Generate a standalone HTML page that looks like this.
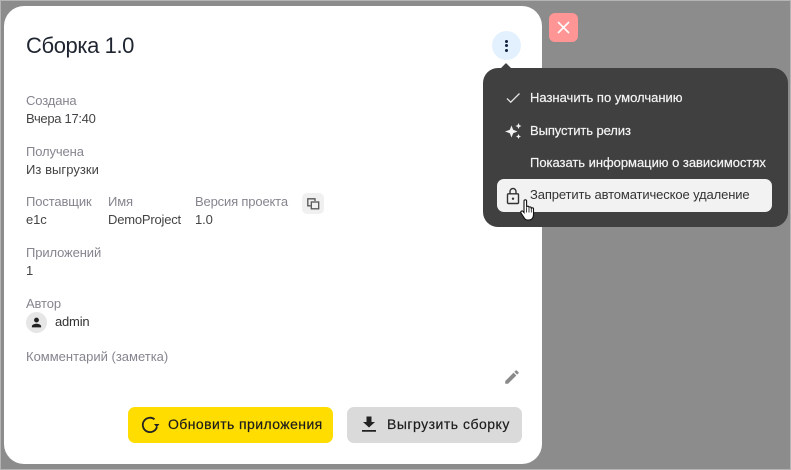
<!DOCTYPE html>
<html><head><meta charset="utf-8">
<style>
*{box-sizing:border-box;margin:0;padding:0}
html,body{width:791px;height:470px;overflow:hidden;background:#8c8c8c;font-family:"Liberation Sans",sans-serif}
.abs,.t{position:absolute}
.t{white-space:nowrap;font-size:13px;line-height:16px;letter-spacing:-.12px}
.l{color:#85858f}
.v{color:#444}
.m{color:#f4f4f4;font-size:13px;-webkit-text-stroke:.2px #f4f4f4}
.b{font-size:14px;line-height:18px;color:#1d1d1d;letter-spacing:.42px;-webkit-text-stroke:.2px #1d1d1d}
svg{position:absolute;display:block}
</style></head><body>
<div class="abs" style="left:0;top:0;width:791px;height:1px;background:#b4b4b4"></div>
<div class="abs" style="left:0;top:0;width:1px;height:470px;background:#b4b4b4"></div>
<div class="abs" style="right:0;top:0;width:1px;height:470px;background:#b4b4b4"></div>
<div class="abs" style="left:0;bottom:0;width:791px;height:1px;background:#b4b4b4"></div>
<div class="abs" style="left:4px;top:6px;width:538px;height:458px;background:#fff;border-radius:20px"></div>

<div class="t" style="left:26px;top:32px;font-size:22px;line-height:28px;color:#1f2530;letter-spacing:-.4px">Сборка 1.0</div>

<div class="t l" style="left:26px;top:93px">Создана</div>
<div class="t v" style="left:26px;top:111px;letter-spacing:-.3px">Вчера 17:40</div>
<div class="t l" style="left:26px;top:144px">Получена</div>
<div class="t v" style="left:26px;top:162px;letter-spacing:.05px">Из выгрузки</div>
<div class="t l" style="left:26px;top:194px">Поставщик</div>
<div class="t v" style="left:26px;top:212px">e1c</div>
<div class="t l" style="left:108px;top:194px">Имя</div>
<div class="t v" style="left:108px;top:212px;letter-spacing:-.2px">DemoProject</div>
<div class="t l" style="left:195px;top:194px;letter-spacing:-.16px">Версия проекта</div>
<div class="t v" style="left:195px;top:212px">1.0</div>
<div class="abs" style="left:302px;top:193px;width:22px;height:21px;background:#f0f0f0;border-radius:5px"></div>
<svg style="left:307px;top:198px" width="13" height="12" viewBox="0 0 13 12" fill="none" stroke="#555" stroke-width="1.300"><path d="M8 3V.8H.8v7h2.700"/><rect x="4.300" y="4" width="7.400" height="6.800"/></svg>
<div class="t l" style="left:26px;top:245px">Приложений</div>
<div class="t v" style="left:26px;top:263px">1</div>
<div class="t l" style="left:26px;top:296px">Автор</div>
<div class="abs" style="left:26px;top:312px;width:21px;height:21px;border-radius:50%;background:#e6e6e6"></div>
<svg style="left:30px;top:316px" width="13" height="13" viewBox="0 0 24 24" fill="#222"><path d="M12 12a4.500 4.500 0 1 0 0-9 4.500 4.500 0 0 0 0 9zm0 2.200c-3.300 0-8.500 1.600-8.500 4.400V21h17v-2.400c0-2.800-5.200-4.400-8.500-4.400z"/></svg>
<div class="t" style="left:55px;top:314px;color:#333;letter-spacing:-.2px">admin</div>
<div class="t l" style="left:26px;top:349px;letter-spacing:0">Комментарий (заметка)</div>
<svg style="left:503px;top:368px" width="18" height="18" viewBox="0 0 24 24" fill="#8a8a8a"><path d="M3 17.250V21h3.750L17.810 9.940l-3.750-3.750L3 17.250zM20.710 7.040a1 1 0 0 0 0-1.410l-2.340-2.340a1 1 0 0 0-1.410 0l-1.830 1.830 3.750 3.750 1.830-1.830z"/></svg>

<div class="abs" style="left:128px;top:407px;width:205px;height:36px;background:#ffdd00;border-radius:7px"></div>
<svg style="left:139px;top:414px" width="22" height="22" viewBox="0 0 22 22" fill="none" stroke="#222" stroke-width="1.800"><path d="M15.500 5.300A7.200 7.200 0 1 0 17.900 13"/><path d="M15 10h5.500L17.700 13.200z" fill="#222" stroke="none"/></svg>
<div class="t b" style="left:168px;top:415px">Обновить приложения</div>
<div class="abs" style="left:347px;top:407px;width:175px;height:36px;background:#dadada;border-radius:7px"></div>
<svg style="left:359px;top:414px" width="20" height="20" viewBox="0 0 20 20" fill="#222"><path d="M7.500 2.500h5v5.500h3.500L10 13.500 4 8h3.500zM3 16h14v1.700H3z"/></svg>
<div class="t b" style="left:387px;top:415px;letter-spacing:.5px">Выгрузить сборку</div>

<div class="abs" style="left:549px;top:13px;width:29px;height:29px;background:#ff9594;border-radius:6px"></div>
<svg style="left:556px;top:20px" width="15" height="15" viewBox="0 0 15 15" stroke="#fff" stroke-width="1.600" fill="none"><path d="M2 2l11 11M13 2L2 13"/></svg>

<div class="abs" style="left:492px;top:31px;width:29px;height:29px;background:#e3f1ff;border-radius:50%"></div>
<div class="abs" style="left:504.500px;top:39.500px;width:3px;height:3px;background:#12233f;border-radius:50%"></div>
<div class="abs" style="left:504.500px;top:44.200px;width:3px;height:3px;background:#12233f;border-radius:50%"></div>
<div class="abs" style="left:504.500px;top:48.800px;width:3px;height:3px;background:#12233f;border-radius:50%"></div>

<div class="abs" style="left:483px;top:68px;width:305px;height:159px;background:#404040;border-radius:15px"></div>
<svg style="left:497px;top:60px" width="18" height="10" viewBox="0 0 18 10" fill="#404040"><path d="M0 9 L4 8 L8.500 3.500 Q9 3 9.500 3.500 L14 8 L18 9 V10 H0z"/></svg>

<svg style="left:505px;top:91px" width="16" height="14" viewBox="0 0 16 14" fill="none" stroke="#e4e4e4" stroke-width="1.300"><path d="M2 7.500l3.700 3.700L14.500 2.500"/></svg>
<div class="t m" style="left:530px;top:90px;letter-spacing:0">Назначить по умолчанию</div>
<svg style="left:504px;top:122px" width="19" height="18" viewBox="0 0 19 18" fill="#f2f2f2"><path d="M7.500 3.500 L9.200 7.800 L13.500 9.500 L9.200 11.200 L7.500 15.500 L5.800 11.200 L1 9.500 L5.800 7.800z"/><path d="M14.500 1 L15.400 3.100 L17.500 4 L15.400 4.900 L14.500 7 L13.600 4.900 L11.500 4 L13.600 3.100z"/><path d="M14.500 12 L15.300 13.700 L17 14.500 L15.300 15.300 L14.500 17 L13.700 15.300 L12 14.500 L13.700 13.700z"/></svg>
<div class="t m" style="left:530px;top:123px;letter-spacing:-.1px">Выпустить релиз</div>
<div class="t m" style="left:530px;top:155px;letter-spacing:-.03px">Показать информацию о зависимостях</div>
<div class="abs" style="left:497px;top:179px;width:275px;height:33px;background:#f2f2f2;border-radius:7px"></div>
<svg style="left:505px;top:187px" width="16" height="18" viewBox="0 0 16 18" fill="none" stroke="#333" stroke-width="1.400"><rect x="2.500" y="6.800" width="11" height="9.700" rx="1"/><path d="M5 6.800V4.500a3 3 0 0 1 6 0v2.300"/><circle cx="8" cy="11.700" r="1.200" fill="#333" stroke="none"/></svg>
<div class="t" style="left:530px;top:187px;color:#333">Запретить автоматическое удаление</div>
<svg style="left:519px;top:198px" width="19" height="25" viewBox="0 0 19 24"><path d="M5 2.500c0-1.600 2.600-1.600 2.600 0v6.200c0-1.300 2.300-1.300 2.300 0v.6c0-1.200 2.300-1.200 2.300 0v.8c0-1.100 2.300-1.100 2.300 .2v6c0 2.800-1.600 5.200-4.500 5.200H8.500c-2.300 0-3-1.500-4.200-3.500L2 14.500c-.8-1.800 1.200-2.700 2.200-1.400l.8 1z" fill="#fff" stroke="#111" stroke-width="1.100"/><path d="M7.600 9v5M10 9.500v4.500M12.300 10v4" stroke="#111" stroke-width=".8"/></svg>
</body></html>
